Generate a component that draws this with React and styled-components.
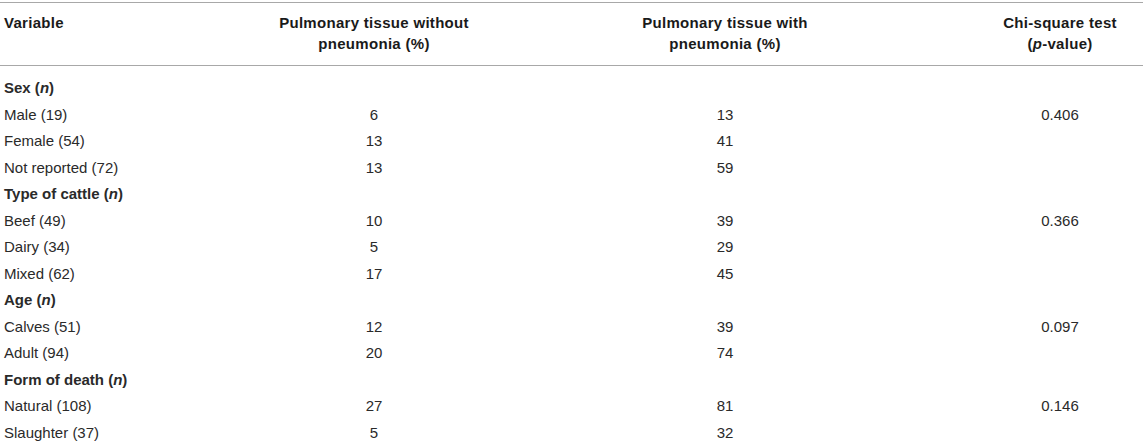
import { Fragment } from "react";
import styled, { createGlobalStyle } from "styled-components";

const GlobalStyle = createGlobalStyle`
  html, body {
    margin: 0;
    padding: 0;
    background: #ffffff;
  }
  body {
    font-family: "Liberation Sans", Arial, Helvetica, sans-serif;
    color: #222222;
  }
`;

const Table = styled.table`
  width: 1143px;
  margin-top: 2px;
  border-collapse: collapse;
  table-layout: fixed;
  font-size: 15px;
`;

const HeadCell = styled.th`
  font-weight: bold;
  color: #1a1a1a;
  letter-spacing: 0.3px;
  line-height: 21px;
  padding: 9px 4px 11px;
  vertical-align: top;
  text-align: ${(p) => (p.$left ? "left" : "center")};
  border-top: 1px solid #a8a8a8;
  border-bottom: 1px solid #a8a8a8;
`;

const Row = styled.tr`
  td {
    padding-top: ${(p) => (p.$first ? "12px" : "3px")};
  }
`;

const Cell = styled.td`
  line-height: 20px;
  padding: 3px 4px 3.5px;
  color: #2a2a2a;
  text-align: ${(p) => (p.$left ? "left" : "center")};
  font-weight: ${(p) => (p.$group ? "bold" : "normal")};
  white-space: nowrap;
`;

const groups = [
  {
    title: "Sex",
    rows: [
      ["Male (19)", "6", "13", "0.406"],
      ["Female (54)", "13", "41", ""],
      ["Not reported (72)", "13", "59", ""],
    ],
  },
  {
    title: "Type of cattle",
    rows: [
      ["Beef (49)", "10", "39", "0.366"],
      ["Dairy (34)", "5", "29", ""],
      ["Mixed (62)", "17", "45", ""],
    ],
  },
  {
    title: "Age",
    rows: [
      ["Calves (51)", "12", "39", "0.097"],
      ["Adult (94)", "20", "74", ""],
    ],
  },
  {
    title: "Form of death",
    rows: [
      ["Natural (108)", "27", "81", "0.146"],
      ["Slaughter (37)", "5", "32", ""],
    ],
  },
];

export default function App() {
  return (
    <>
      <GlobalStyle />
      <Table>
        <colgroup>
          <col style={{ width: 275 }} />
          <col style={{ width: 198 }} />
          <col style={{ width: 504 }} />
          <col style={{ width: 166 }} />
        </colgroup>
        <thead>
          <tr>
            <HeadCell $left>Variable</HeadCell>
            <HeadCell>
              Pulmonary tissue without
              <br />
              pneumonia (%)
            </HeadCell>
            <HeadCell>
              Pulmonary tissue with
              <br />
              pneumonia (%)
            </HeadCell>
            <HeadCell>
              Chi-square test
              <br />(<i>p</i>-value)
            </HeadCell>
          </tr>
        </thead>
        <tbody>
          {groups.map((g, gi) => (
            <Fragment key={g.title}>
              <Row $first={gi === 0}>
                <Cell $left $group>
                  {g.title} (<i>n</i>)
                </Cell>
                <Cell />
                <Cell />
                <Cell />
              </Row>
              {g.rows.map((r) => (
                <Row key={r[0]}>
                  <Cell $left>{r[0]}</Cell>
                  <Cell>{r[1]}</Cell>
                  <Cell>{r[2]}</Cell>
                  <Cell>{r[3]}</Cell>
                </Row>
              ))}
            </Fragment>
          ))}
        </tbody>
      </Table>
    </>
  );
}
